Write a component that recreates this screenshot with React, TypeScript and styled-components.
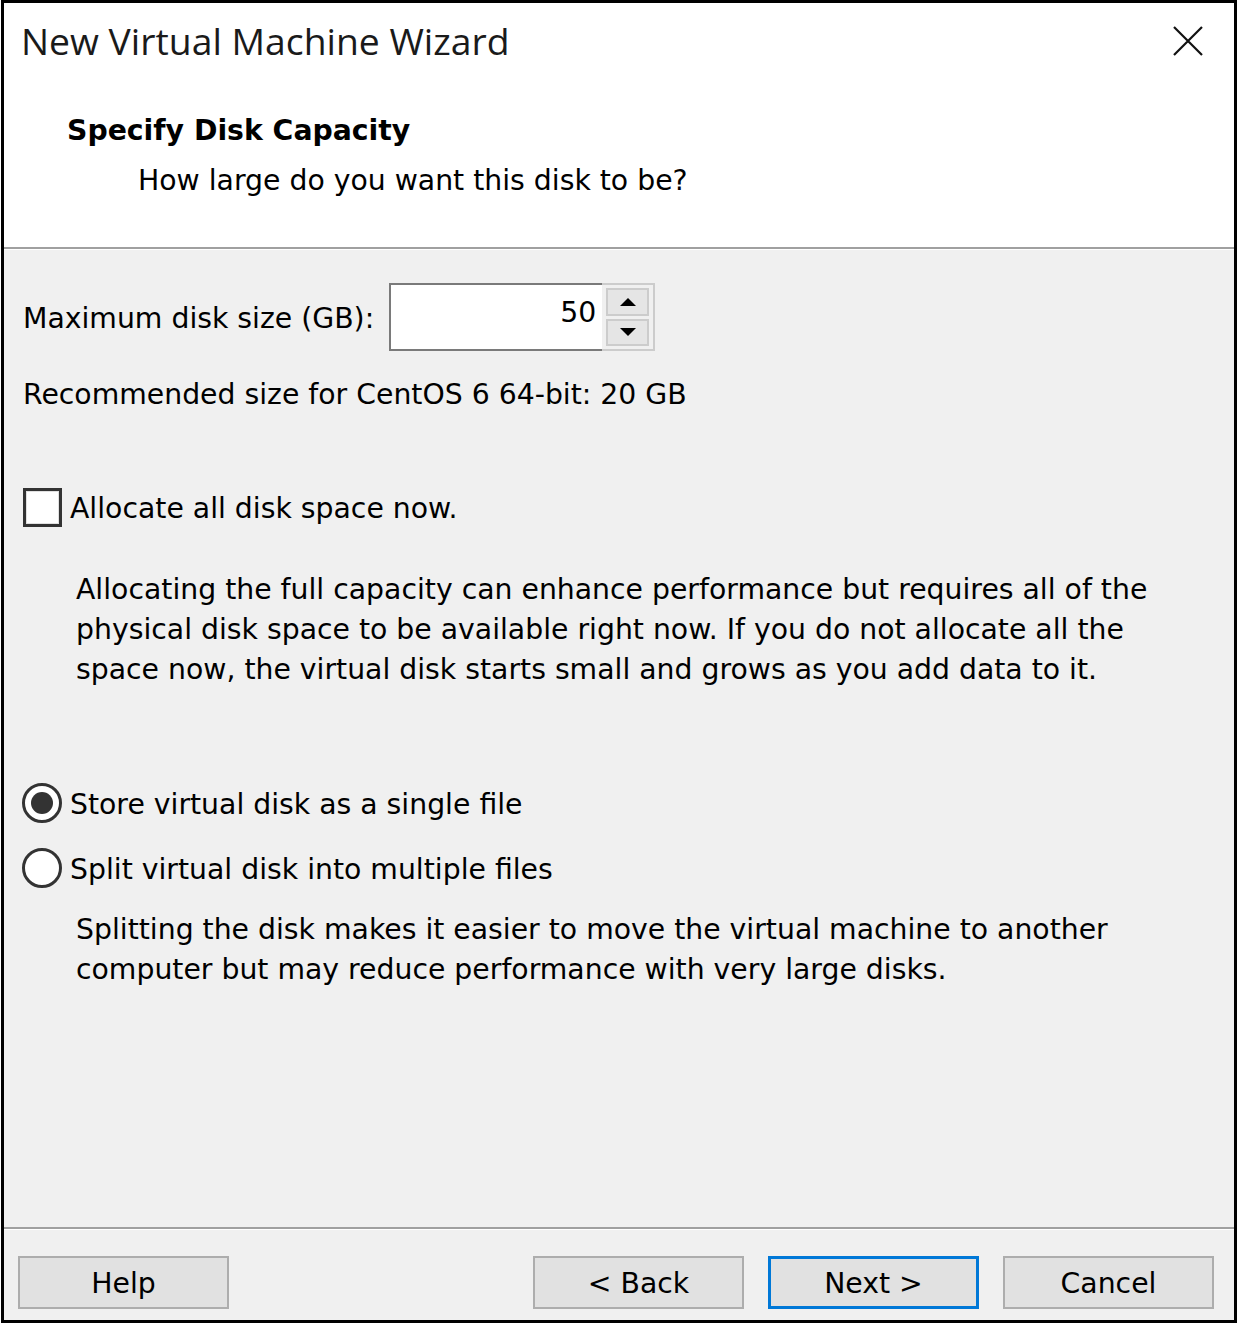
import { createGlobalStyle } from 'styled-components';
import styled from 'styled-components';

const GlobalStyle = createGlobalStyle`
	html, body {
		margin: 0;
		padding: 0;
		background: #ffffff;
	}
	body {
		font-family: 'DejaVu Sans', 'Liberation Sans', sans-serif;
		color: #000000;
	}
`;

const Window = styled.div`
	box-sizing: border-box;
	width: 1236px;
	height: 1323px;
	margin-left: 1px;
	border: 3px solid #000000;
	display: flex;
	flex-direction: column;
	background: #f0f0f0;
`;

const Header = styled.div`
	background: #ffffff;
	height: 244px;
	display: flex;
	flex-direction: column;
`;

const TitleBar = styled.div`
	display: flex;
	align-items: center;
	justify-content: space-between;
	padding: 16px 30px 0 17px;
	height: 44px;
`;

const Title = styled.div`
	font-family: 'Open Sans', 'Noto Sans', sans-serif;
	font-size: 37.3px;
	line-height: 44px;
	color: #1a1a1a;
`;

const CloseButton = styled.div`
	width: 32px;
	height: 32px;
	display: flex;
	align-items: center;
	justify-content: center;
`;

const Heading = styled.div`
	font-weight: bold;
	font-size: 28.3px;
	line-height: 40px;
	margin: 48px 0 0 63px;
`;

const SubHeading = styled.div`
	font-size: 28.3px;
	line-height: 40px;
	margin: 10px 0 0 134px;
`;

const Etched = styled.div`
	height: 3px;
	box-sizing: border-box;
	border-top: 2px solid #a0a0a0;
	border-bottom: 1px solid #ffffff;
`;

const Body = styled.div`
	flex: 1;
	display: flex;
	flex-direction: column;
	padding: 33px 0 0 19px;
	font-size: 28.3px;
	line-height: 40px;
`;

const SizeRow = styled.div`
	display: flex;
	align-items: center;
	gap: 15px;
	height: 68px;
`;

const Label = styled.span`
	padding-top: 3px;
`;

const Spinner = styled.div`
	display: flex;
	width: 266px;
	height: 68px;
	box-sizing: border-box;
	border: 2px solid #cccccc;
`;

const SpinnerField = styled.div`
	flex: 1;
	background: #ffffff;
	border: 2px solid #7a7a7a;
	border-right: none;
	margin: -2px 0 -2px -2px;
	display: flex;
	align-items: flex-start;
	justify-content: flex-end;
	padding: 8px 6px 0 0;
`;

const SpinnerButtons = styled.div`
	width: 51px;
	display: flex;
	flex-direction: column;
	gap: 3px;
	padding: 3px 4px;
	box-sizing: border-box;
`;

const SpinnerButton = styled.div`
	flex: 1;
	background: #e5e5e5;
	border: 2px solid #cccccc;
	display: flex;
	align-items: center;
	justify-content: center;
`;

const Arrow = styled.div<{ $up?: boolean }>`
	width: 0;
	height: 0;
	border-left: 8px solid transparent;
	border-right: 8px solid transparent;
	${({ $up }) => ($up ? 'border-bottom: 8px solid #000;' : 'border-top: 8px solid #000;')}
`;

const Line = styled.div<{ $top: number }>`
	margin-top: ${({ $top }) => $top}px;
	padding-top: 2px;
`;

const OptionRow = styled.div<{ $top: number }>`
	display: flex;
	align-items: center;
	gap: 8px;
	height: 40px;
	margin-top: ${({ $top }) => $top}px;
`;

const CheckBox = styled.div`
	width: 39px;
	height: 39px;
	box-sizing: border-box;
	border: 3px solid #333333;
	background: #ffffff;
	box-shadow: inset 0 0 0 1px #e0e0e0;
`;

const Radio = styled.div<{ $checked?: boolean }>`
	width: 40px;
	height: 40px;
	box-sizing: border-box;
	border-radius: 50%;
	border: 3px solid #333333;
	background: #ffffff;
	display: flex;
	align-items: center;
	justify-content: center;
	margin-left: -1px;

	&::after {
		content: '';
		width: 22px;
		height: 22px;
		border-radius: 50%;
		background: ${({ $checked }) => ($checked ? '#333333' : 'transparent')};
	}
`;

const Note = styled.div<{ $top: number }>`
	margin: ${({ $top }) => $top}px 0 0 53px;
	padding-top: 2px;
`;

const Footer = styled.div`
	display: flex;
	align-items: flex-start;
	padding: 26px 20px 0 14px;
	height: 90px;
	box-sizing: border-box;
`;

const Spacer = styled.div`
	flex: 1;
`;

const Button = styled.div<{ $default?: boolean }>`
	width: 211px;
	height: 53px;
	box-sizing: border-box;
	background: #e1e1e1;
	border: ${({ $default }) => ($default ? '3px solid #0078d7' : '2px solid #adadad')};
	display: flex;
	align-items: center;
	justify-content: center;
	font-size: 28.3px;
	padding-top: 2px;
	margin-left: 24px;

	&:first-child {
		margin-left: 0;
	}
`;

const App = () => {
	return (
		<>
			<GlobalStyle />
			<Window>
				<Header>
					<TitleBar>
						<Title>New Virtual Machine Wizard</Title>
						<CloseButton>
							<svg width='32' height='32' viewBox='0 0 32 32'>
								<path d='M2 2 L30 30 M30 2 L2 30' stroke='#111' strokeWidth='2.2' fill='none' />
							</svg>
						</CloseButton>
					</TitleBar>
					<Heading>Specify Disk Capacity</Heading>
					<SubHeading>How large do you want this disk to be?</SubHeading>
				</Header>
				<Etched />
				<Body>
					<SizeRow>
						<Label>Maximum disk size (GB):</Label>
						<Spinner>
							<SpinnerField>50</SpinnerField>
							<SpinnerButtons>
								<SpinnerButton>
									<Arrow $up />
								</SpinnerButton>
								<SpinnerButton>
									<Arrow />
								</SpinnerButton>
							</SpinnerButtons>
						</Spinner>
					</SizeRow>
					<Line $top={22}>Recommended size for CentOS 6 64-bit: 20 GB</Line>
					<OptionRow $top={72}>
						<CheckBox />
						<Label>Allocate all disk space now.</Label>
					</OptionRow>
					<Note $top={41}>
						Allocating the full capacity can enhance performance but requires all of the
						<br />
						physical disk space to be available right now. If you do not allocate all the
						<br />
						space now, the virtual disk starts small and grows as you add data to it.
					</Note>
					<OptionRow $top={93}>
						<Radio $checked />
						<Label>Store virtual disk as a single file</Label>
					</OptionRow>
					<OptionRow $top={25}>
						<Radio />
						<Label>Split virtual disk into multiple files</Label>
					</OptionRow>
					<Note $top={20}>
						Splitting the disk makes it easier to move the virtual machine to another
						<br />
						computer but may reduce performance with very large disks.
					</Note>
				</Body>
				<Etched />
				<Footer>
					<Button>Help</Button>
					<Spacer />
					<Button>&lt; Back</Button>
					<Button $default>Next &gt;</Button>
					<Button>Cancel</Button>
				</Footer>
			</Window>
		</>
	);
};

export default App;
